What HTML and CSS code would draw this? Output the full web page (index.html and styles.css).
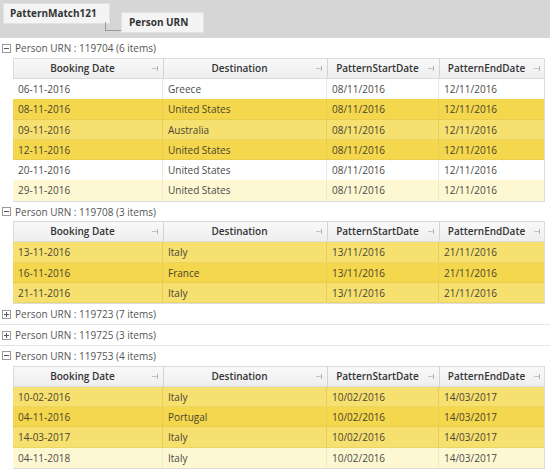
FILE: index.html
```html
<!DOCTYPE html>
<html>
<head>
<meta charset="utf-8">
<link rel="stylesheet" href="styles.css">
</head>
<body>
<div class="tabbar">
  <div class="tab tab1">PatternMatch121</div>
  <div class="connector"></div>
  <div class="tab tab2">Person URN</div>
</div>

<div class="group">
  <div class="ghead first"><svg class="tog" width="9" height="9" viewBox="0 0 9 9"><rect x="0.5" y="0.5" width="8" height="8" fill="#fff" stroke="#9a9a9a"/><path d="M2 4.5h5" stroke="#555"/></svg>Person URN : 119704 (6 items)</div>
  <div class="grid">
    <div class="row head"><div class="c">Booking Date<i class="s"></i></div><div class="c">Destination<i class="s"></i></div><div class="c">PatternStartDate<i class="s"></i></div><div class="c">PatternEndDate<i class="s"></i></div></div>
    <div class="row"><div class="c">06-11-2016</div><div class="c">Greece</div><div class="c">08/11/2016</div><div class="c">12/11/2016</div></div>
    <div class="row dark"><div class="c">08-11-2016</div><div class="c">United States</div><div class="c">08/11/2016</div><div class="c">12/11/2016</div></div>
    <div class="row light"><div class="c">09-11-2016</div><div class="c">Australia</div><div class="c">08/11/2016</div><div class="c">12/11/2016</div></div>
    <div class="row dark"><div class="c">12-11-2016</div><div class="c">United States</div><div class="c">08/11/2016</div><div class="c">12/11/2016</div></div>
    <div class="row"><div class="c">20-11-2016</div><div class="c">United States</div><div class="c">08/11/2016</div><div class="c">12/11/2016</div></div>
    <div class="row pale"><div class="c">29-11-2016</div><div class="c">United States</div><div class="c">08/11/2016</div><div class="c">12/11/2016</div></div>
  </div>
</div>

<div class="group">
  <div class="ghead"><svg class="tog" width="9" height="9" viewBox="0 0 9 9"><rect x="0.5" y="0.5" width="8" height="8" fill="#fff" stroke="#9a9a9a"/><path d="M2 4.5h5" stroke="#555"/></svg>Person URN : 119708 (3 items)</div>
  <div class="grid">
    <div class="row head"><div class="c">Booking Date<i class="s"></i></div><div class="c">Destination<i class="s"></i></div><div class="c">PatternStartDate<i class="s"></i></div><div class="c">PatternEndDate<i class="s"></i></div></div>
    <div class="row light"><div class="c">13-11-2016</div><div class="c">Italy</div><div class="c">13/11/2016</div><div class="c">21/11/2016</div></div>
    <div class="row dark"><div class="c">16-11-2016</div><div class="c">France</div><div class="c">13/11/2016</div><div class="c">21/11/2016</div></div>
    <div class="row light"><div class="c">21-11-2016</div><div class="c">Italy</div><div class="c">13/11/2016</div><div class="c">21/11/2016</div></div>
  </div>
</div>

<div class="group collapsed">
  <div class="ghead"><svg class="tog" width="9" height="9" viewBox="0 0 9 9"><rect x="0.5" y="0.5" width="8" height="8" fill="#fff" stroke="#9a9a9a"/><path d="M2 4.5h5M4.5 2v5" stroke="#555"/></svg>Person URN : 119723 (7 items)</div>
</div>
<div class="group collapsed">
  <div class="ghead"><svg class="tog" width="9" height="9" viewBox="0 0 9 9"><rect x="0.5" y="0.5" width="8" height="8" fill="#fff" stroke="#9a9a9a"/><path d="M2 4.5h5M4.5 2v5" stroke="#555"/></svg>Person URN : 119725 (3 items)</div>
</div>

<div class="group">
  <div class="ghead"><svg class="tog" width="9" height="9" viewBox="0 0 9 9"><rect x="0.5" y="0.5" width="8" height="8" fill="#fff" stroke="#9a9a9a"/><path d="M2 4.5h5" stroke="#555"/></svg>Person URN : 119753 (4 items)</div>
  <div class="grid">
    <div class="row head"><div class="c">Booking Date<i class="s"></i></div><div class="c">Destination<i class="s"></i></div><div class="c">PatternStartDate<i class="s"></i></div><div class="c">PatternEndDate<i class="s"></i></div></div>
    <div class="row light"><div class="c">10-02-2016</div><div class="c">Italy</div><div class="c">10/02/2016</div><div class="c">14/03/2017</div></div>
    <div class="row dark"><div class="c">04-11-2016</div><div class="c">Portugal</div><div class="c">10/02/2016</div><div class="c">14/03/2017</div></div>
    <div class="row light"><div class="c">14-03-2017</div><div class="c">Italy</div><div class="c">10/02/2016</div><div class="c">14/03/2017</div></div>
    <div class="row pale"><div class="c">04-11-2018</div><div class="c">Italy</div><div class="c">10/02/2016</div><div class="c">14/03/2017</div></div>
  </div>
</div>
</body>
</html>
```

FILE: styles.css
```css
html, body {
  margin: 0;
  padding: 0;
  background: #ffffff;
}
body {
  font-family: "Open Sans", "Noto Sans", sans-serif;
  font-size: 10px;
  color: #4a4a4a;
  width: 550px;
  overflow: hidden;
}
.tabbar {
  height: 38px;
  background: #d6d6d6;
  display: flex;
  align-items: flex-start;
  padding: 3px 0 0 3px;
  box-sizing: border-box;
}
.tab {
  background: #f4f4f4;
  border: 1px solid #e2e2e2;
  font-weight: 700;
  color: #333;
  box-sizing: border-box;
  height: 21px;
  line-height: 18px;
}
.tab1 {
  width: 107px;
  padding-left: 6px;
}
.tab2 {
  width: 83px;
  margin-top: 9px;
  padding-left: 7px;
}
.connector {
  width: 16px;
  height: 9px;
  margin-left: -5px;
  margin-top: 19px;
  border-left: 1px solid #9a9a9a;
  border-bottom: 1px solid #9a9a9a;
  box-sizing: border-box;
}
.group.collapsed {
  border-bottom: 1px solid #e4e4e4;
}
.ghead {
  height: 19.5px;
  display: flex;
  align-items: center;
  padding-left: 2px;
  gap: 4px;
  color: #555;
  box-sizing: border-box;
}
.ghead.first {
  height: 20px;
}
.group.collapsed .ghead {
  height: 20px;
}
.tog {
  flex: none;
}
.grid {
  margin-left: 13px;
  width: 532px;
  border-right: 1px solid #dcdcdc;
  border-bottom: 1px solid #dcdcdc;
  box-sizing: border-box;
}
.row {
  display: grid;
  grid-template-columns: 150px 164px 112px 105px;
  height: 20.3px;
  line-height: 20px;
  background: #ffffff;
}
.row .c {
  padding-left: 5px;
  border-right: 1px solid #e8e8e8;
  white-space: nowrap;
  overflow: hidden;
}
.row .c:last-child {
  border-right: none;
}
.row.head {
  height: 21px;
  background: linear-gradient(#f9f9f9, #eeeeee);
  border-top: 1px solid #dadada;
  border-bottom: 1px solid #dcdcdc;
  border-left: 1px solid #dadada;
  box-sizing: border-box;
}
.row.head .c {
  font-weight: 600;
  color: #333;
  text-align: center;
  position: relative;
  padding: 0 12px 0 0;
  border-right: 1px solid #d4d4d4;
  line-height: 19px;
}
.row.head .c:last-child {
  border-right: none;
}
.s {
  position: absolute;
  right: 5px;
  top: 7px;
  width: 6px;
  height: 5px;
  border-right: 1px solid #b4b4b4;
  box-sizing: border-box;
}
.s::before {
  content: "";
  position: absolute;
  left: 0;
  top: 2px;
  width: 5px;
  height: 1px;
  background: #c4c4c4;
}
.row.dark {
  background: #f4d74c;
  border-bottom: 1px solid #e9cd50;
}
.row.light {
  background: #f5e070;
  border-bottom: 1px solid #ebd563;
}
.row.dark, .row.light {
  box-sizing: border-box;
  color: #4a4530;
}
.row.dark .c, .row.light .c {
  border-right-color: #e6cc5c;
}
.row.pale {
  background: #fdf8d2;
}
.row.pale .c {
  border-right-color: #f0ead0;
}
```
